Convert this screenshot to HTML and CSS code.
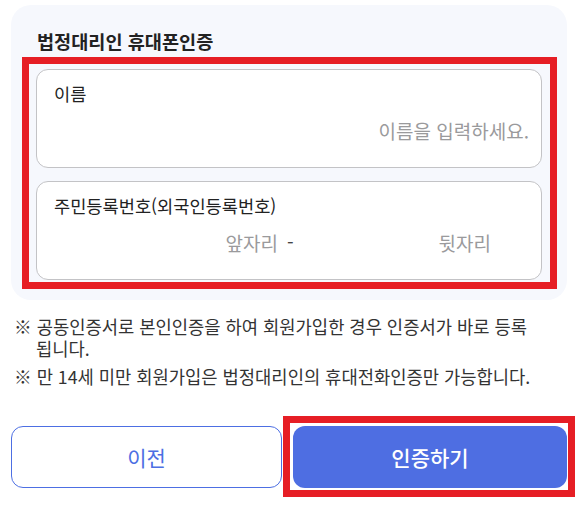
FILE: index.html
```html
<!DOCTYPE html>
<html lang="ko">
<head>
<meta charset="utf-8">
<link rel="stylesheet" href="styles.css">
</head>
<body>
<div class="page">
  <section class="panel">
    <h2 class="panel-title">법정대리인 휴대폰인증</h2>
    <div class="fields">
      <div class="field">
        <div class="field-label">이름</div>
        <div class="field-row">
          <input class="field-input" type="text" placeholder="이름을 입력하세요.">
        </div>
      </div>
      <div class="field">
        <div class="field-label">주민등록번호(외국인등록번호)</div>
        <div class="field-row split">
          <input class="field-input front" type="text" placeholder="앞자리">
          <span class="dash">-</span>
          <input class="field-input back" type="password" placeholder="뒷자리">
        </div>
      </div>
    </div>
  </section>
  <ul class="notes">
    <li>※ 공동인증서로 본인인증을 하여 회원가입한 경우 인증서가 바로 등록 됩니다.</li>
    <li>※ 만 14세 미만 회원가입은 법정대리인의 휴대전화인증만 가능합니다.</li>
  </ul>
  <div class="actions">
    <button class="btn btn-outline" type="button">이전</button>
    <span class="highlight">
      <button class="btn btn-primary" type="button">인증하기</button>
    </span>
  </div>
</div>
</body>
</html>
```

FILE: styles.css
```css
* { box-sizing: border-box; }
html, body {
  margin: 0;
  padding: 0;
  background: #ffffff;
}
body {
  font-family: "Noto Sans CJK KR", "Noto Sans", sans-serif;
  color: #222222;
}
.page {
  width: 587px;
  padding: 5px 12px 0 11px;
}
.panel {
  background: #f6f8fd;
  border-radius: 20px;
  margin-right: 8px;
  padding: 24px 10px 11px 11px;
}
.panel-title {
  margin: 0 0 4px 15px;
  font-size: 18.6px;
  line-height: 24px;
  font-weight: 700;
  color: #222222;
}
.fields {
  border: 7px solid #e61e25;
  padding: 5px 8px 2px 7px;
  display: flex;
  flex-direction: column;
  gap: 13px;
}
.field {
  height: 99px;
  background: #ffffff;
  border: 1px solid #c3c3c6;
  border-radius: 12px;
  padding: 12px 11px 17px 17px;
  display: flex;
  flex-direction: column;
  gap: 4px;
}
.field-label {
  font-size: 17.6px;
  line-height: 24px;
  color: #222222;
}
.field-row {
  height: 40px;
  display: flex;
  align-items: center;
}
.field-input {
  flex: 1;
  min-width: 0;
  height: 40px;
  border: none;
  outline: none;
  background: transparent;
  font-family: "Noto Sans CJK KR", "Noto Sans", sans-serif;
  font-size: 19px;
  color: #222222;
  text-align: right;
  padding: 0 1px 0 0;
}
.field-input::placeholder {
  color: #9a9a9c;
}
.split .front {
  flex: 0 0 225px;
}
.dash {
  font-size: 19px;
  color: #444444;
  margin: 0 7px 0 8px;
  line-height: 24px;
}
.split .back {
  flex: 1;
  padding-right: 39px;
}
.notes {
  list-style: none;
  margin: 15px 0 0 0;
  padding: 0 0 0 3px;
  display: flex;
  flex-direction: column;
  gap: 6px;
}
.notes li {
  font-size: 17.7px;
  line-height: 22px;
  color: #333333;
  padding-left: 22px;
  text-indent: -22px;
  word-break: keep-all;
}
.actions {
  margin-top: 29px;
  display: flex;
  align-items: center;
  gap: 1px;
}
.btn {
  height: 62px;
  border-radius: 12px;
  font-family: "Noto Sans CJK KR", "Noto Sans", sans-serif;
  font-size: 21px;
  cursor: pointer;
  flex-shrink: 0;
}
.btn-outline {
  width: 271px;
  background: #ffffff;
  border: 1px solid #4d6fe3;
  color: #4d6fe3;
}
.highlight {
  display: flex;
  flex-shrink: 0;
  border: 7px solid #e61e25;
  padding: 3px 1px 2px 3px;
}
.btn-primary {
  width: 274px;
  background: #4e6ee2;
  border: none;
  color: #ffffff;
  font-weight: 500;
}
```
